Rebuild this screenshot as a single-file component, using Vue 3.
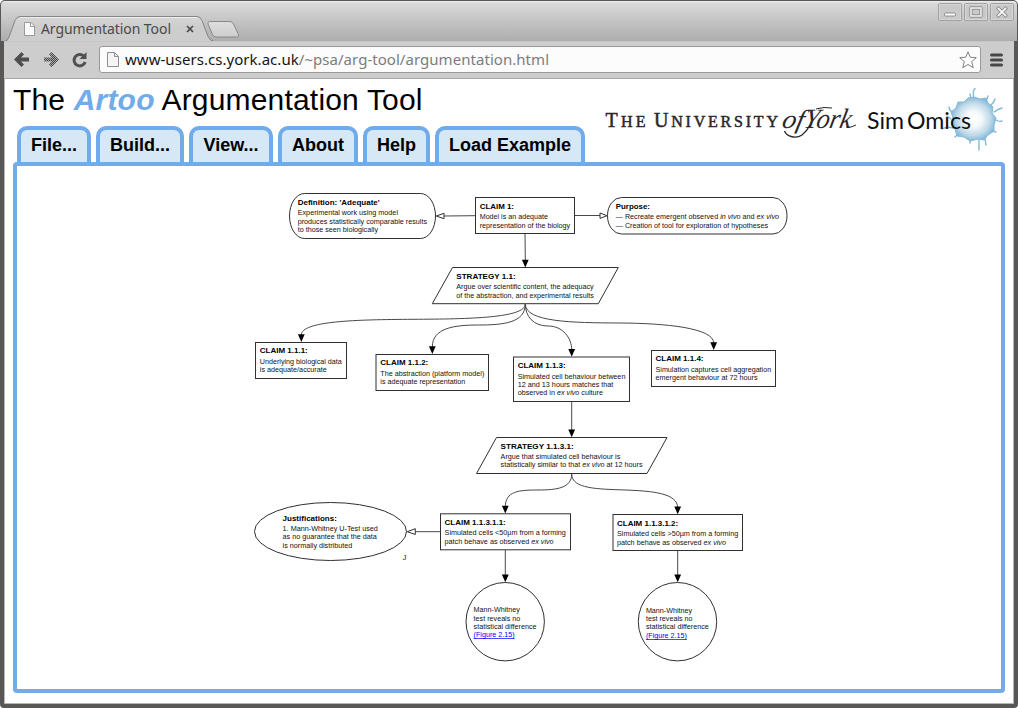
<script setup>
const menu = [
  { label: 'File...', width: 74 },
  { label: 'Build...', width: 88 },
  { label: 'View...', width: 84 },
  { label: 'About', width: 80 },
  { label: 'Help', width: 67 },
  { label: 'Load Example', width: 150 },
]

// each line: [baseline, length, text runs]; an "i" run is italic
const r = (t) => [{ t }]
const blocks = [
  { x: 297.7, title: [205, 82, "Definition: 'Adequate'"], lines: [[215, 100.3, r('Experimental work using model')], [224, 129.3, r('produces statistically comparable results')], [232, 80.3, r('to those seen biologically')]] },
  { x: 479.7, title: [209, 34.3, 'CLAIM 1:'], lines: [[219, 68.3, r('Model is an adequate')], [228, 90.5, r('representation of the biology')]] },
  { x: 615.7, title: [209, 34.3, 'Purpose:'], lines: [[219, 163.3, [{ t: '— Recreate emergent observed ' }, { t: 'in vivo', i: 1 }, { t: ' and ' }, { t: 'ex vivo', i: 1 }]], [228, 152.3, r('— Creation of tool for exploration of hypotheses')]] },
  { x: 456.3, title: [279, 59.3, 'STRATEGY 1.1:'], lines: [[289, 137.3, r('Argue over scientific content, the adequacy')], [298, 137.6, r('of the abstraction, and experimental results')]] },
  { x: 259.8, title: [353, 48, 'CLAIM 1.1.1:'], lines: [[364, 82, r('Underlying biological data')], [372, 67, r('is adequate/accurate')]] },
  { x: 380.3, title: [365, 48, 'CLAIM 1.1.2:'], lines: [[376, 104, r('The abstraction (platform model)')], [384, 85, r('is adequate representation')]] },
  { x: 517.7, title: [368, 48, 'CLAIM 1.1.3:'], lines: [[379, 107.7, r('Simulated cell behaviour between')], [387, 95.7, r('12 and 13 hours matches that')], [395, 85.3, [{ t: 'observed in ' }, { t: 'ex vivo', i: 1 }, { t: ' culture' }]]] },
  { x: 655.5, title: [361, 48, 'CLAIM 1.1.4:'], lines: [[372, 115.7, r('Simulation captures cell aggregation')], [380, 102, r('emergent behaviour at 72 hours')]] },
  { x: 500.6, title: [449, 73, 'STRATEGY 1.1.3.1:'], lines: [[459, 119.7, r('Argue that simulated cell behaviour is')], [467, 142, [{ t: 'statistically similar to that ' }, { t: 'ex vivo', i: 1 }, { t: ' at 12 hours' }]]] },
  { x: 282.6, title: [521, 54.2, 'Justifications:'], lines: [[531, 95.3, r('1. Mann-Whitney U-Test used')], [539, 94.3, r('as no guarantee that the data')], [548, 69.6, r('is normally distributed')]] },
  { x: 402.7, lines: [[560, 3.6, r('J')]] },
  { x: 444.6, title: [525, 61.2, 'CLAIM 1.1.3.1.1:'], lines: [[535, 121.2, r('Simulated cells <50µm from a forming')], [544, 109, [{ t: 'patch behave as observed ' }, { t: 'ex vivo', i: 1 }]]] },
  { x: 617, title: [526, 61.2, 'CLAIM 1.1.3.1.2:'], lines: [[536, 121.2, r('Simulated cells >50µm from a forming')], [545, 109, [{ t: 'patch behave as observed ' }, { t: 'ex vivo', i: 1 }]]] },
  { x: 473.6, lines: [[612, 46.3, r('Mann-Whitney')], [621, 46.7, r('test reveals no')], [629, 62.9, r('statistical difference')], [637, 41, [{ t: '(Figure 2.15)', link: 1 }]]] },
  { x: 645.9, lines: [[613, 46.3, r('Mann-Whitney')], [621, 46.7, r('test reveals no')], [629, 62.9, r('statistical difference')], [638, 41, [{ t: '(Figure 2.15)', link: 1 }]]] },
]

const boxes = [
  [475.5, 197.5, 99, 36], [255.5, 342.5, 91, 36], [376, 354.5, 112.5, 36], [513.5, 357, 116, 44.5],
  [651.5, 350.5, 124, 36], [440.5, 513.8, 130, 36], [613, 514.5, 129.5, 36],
]
const edges = [
  'M525 233.5L525.3 260',
  'M525.3 304C525.3 318 470 319 413 319.3S301.3 321 301.3 335',
  'M525.3 304C525.3 323 503 325 478.5 325S432.3 328 432.3 347',
  'M525.3 304C525.3 316 533 326 548 326S571.7 338 571.7 350',
  'M525.3 304C525.3 322 572 322.8 619 323S713.7 328 713.7 343',
  'M571.7 402V430',
  'M571.7 474C571.7 488 557 490 538 490S505.3 491 505.3 507',
  'M571.7 474C571.7 489 598 489 625 490S677.7 493 677.7 508',
  'M505.3 550V575', 'M677.7 551V575',
  'M475 215.7L444 216', 'M575 215.5H600', 'M440 531.7H415.5',
]
const heads = [[525.3, 267.5], [301.3, 342], [432.3, 354], [571.7, 356.7], [713.7, 350], [571.7, 437.3], [505.3, 513.5], [677.7, 514.3], [505.3, 582.3], [677.7, 582.3]]
</script>

<template>
  <div class="window">
    <header class="titlebar">
      <svg class="tabs" width="250" height="26" viewBox="5 16 250 26">
        <defs>
          <linearGradient id="tabfill" x1="0" y1="0" x2="0" y2="1"><stop offset="0" stop-color="#d6d6d6" /><stop offset=".4" stop-color="#cdcdcd" /></linearGradient>
          <linearGradient id="newtab" x1="0" y1="0" x2="0" y2="1"><stop offset="0" stop-color="#dedede" /><stop offset="1" stop-color="#cecece" /></linearGradient>
        </defs>
        <path d="M4 41.5Q8 41 9 37L15 20.500Q16.500 16.500 20 16.500H197Q200.500 16.500 202 20.500L208 36.500Q210 41 214 41.500V43H4Z" fill="url(#tabfill)" stroke="#858585" />
        <path d="M20 17.500H197" stroke="#eee" />
        <path d="M209.500 21.500H230Q232.500 21.500 233.500 24L238 33.500Q239.500 37 236.500 37H216.500Q213.500 37 212.500 34.500L208 24Q207.500 21.500 209.500 21.500Z" fill="url(#newtab)" stroke="#898989" />
        <path d="M24.500 22.500H31L34.500 26V35.500H24.500Z" fill="#fbfbfb" stroke="#999" />
        <path d="M30.500 23V26.500H34" fill="none" stroke="#999" />
        <text x="41" y="34" class="tabname" textLength="130">Argumentation Tool</text>
        <path d="M187 26L193 32M193 26L187 32" stroke="#484848" stroke-width="1.700" />
      </svg>
      <div class="controls">
        <svg v-for="n in 3" :key="n" width="24" height="19" viewBox="0 0 24 19">
          <rect x=".5" y=".5" width="23" height="17" rx="1.500" fill="#c9c9c9" stroke="#a0a0a0" />
          <rect x="1.500" y="1.500" width="21" height="15" fill="none" stroke="#d6d6d6" />
          <rect v-if="n === 1" x="6.500" y="10" width="11" height="3" rx="1" fill="#fff" stroke="#8d8d8d" />
          <g v-else-if="n === 2" fill="none"><rect x="7" y="5" width="10" height="8" stroke="#8d8d8d" stroke-width="3.400" stroke-linejoin="round" /><rect x="7" y="5" width="10" height="8" stroke="#f2f2f2" stroke-width="1.500" /></g>
          <g v-else stroke-linecap="square"><path d="M8.500 5.500L15.500 12.500M15.500 5.500L8.500 12.500" stroke="#8d8d8d" stroke-width="3.500" /><path d="M8.500 5.500L15.500 12.500M15.500 5.500L8.500 12.500" stroke="#fff" stroke-width="1.700" /></g>
        </svg>
      </div>
    </header>

    <nav class="toolbar">
      <svg class="navicons" width="76" height="18" viewBox="13 50 76 18">
        <defs><pattern id="dots" width="2" height="2" patternUnits="userSpaceOnUse"><rect width="2" height="2" fill="#aaa" /><rect width="1" height="1" fill="#444" /><rect x="1" y="1" width="1" height="1" fill="#444" /></pattern></defs>
        <path d="M14 58.500L21.500 51L24 53.500L21 56.500H29V60.500H21L24 63.500L21.500 66Z" fill="#4e4e4e" />
        <path d="M59 58.500L51.500 51L49 53.500L52 56.500H44V60.500H52L49 63.500L51.500 66Z" fill="url(#dots)" />
        <path d="M83.700 55A5.700 5.700 0 1 0 85.200 61" fill="none" stroke="#505050" stroke-width="3" />
        <path d="M86.500 51V58H79.500Z" fill="#505050" />
      </svg>
      <div class="address">
        <svg width="12" height="15" viewBox="0 0 12 15"><path d="M.5 .5H7.500L11.500 4.500V14.500H.5Z" fill="#f5f5f5" stroke="#8e8e8e" /><path d="M7.500 1V4.500H11" fill="none" stroke="#8e8e8e" /></svg>
        <svg class="url" width="430" height="24"><text x="0" y="17" textLength="424">www-users.cs.york.ac.uk<tspan fill="#7c7c7c">/~psa/arg-tool/argumentation.html</tspan></text></svg>
        <svg class="star" width="18" height="18" viewBox="0 0 18 18"><path d="M9 .8L11.200 6.200L17.300 6.700L12.700 10.600L14.200 16.700L9 13.400L3.800 16.700L5.300 10.600L.7 6.700L6.800 6.200Z" fill="#fff" stroke="#808080" stroke-linejoin="round" /></svg>
      </div>
      <svg class="burger" width="13" height="14" viewBox="0 0 13 14"><path d="M1.500 2H11.500M1.500 7H11.500M1.500 12H11.500" stroke="#484848" stroke-width="3" stroke-linecap="round" /></svg>
    </nav>

    <main class="page">
      <div class="top">
        <div class="left">
          <h1>The <em>Artoo</em> Argumentation Tool</h1>
          <ul class="menu">
            <li v-for="m in menu" :key="m.label" :style="{ width: m.width + 'px' }">{{ m.label }}</li>
          </ul>
        </div>
        <svg class="logos" width="402" height="76" viewBox="601 84 402 76">
          <defs>
            <radialGradient id="cell"><stop offset="0" stop-color="#fff" /><stop offset=".35" stop-color="#f5f9fb" /><stop offset=".75" stop-color="#bfd9e8" /><stop offset="1" stop-color="#84bada" /></radialGradient>
          </defs>
          <g class="uni">
            <text x="604.500" y="127" textLength="40" lengthAdjust="spacing"><tspan font-size="20">T</tspan>HE</text>
            <text x="653" y="127" textLength="124" lengthAdjust="spacing"><tspan font-size="20">U</tspan>NIVERSITY</text>
          </g>
          <text class="script" x="780" y="128" font-size="26" textLength="22" lengthAdjust="spacingAndGlyphs" transform="translate(780 128) skewX(-12) translate(-780 -128)">of</text>
          <text class="script" x="802" y="128" font-size="28" textLength="47" lengthAdjust="spacingAndGlyphs" transform="translate(802 128) skewX(-12) translate(-802 -128)">York</text>
          <path d="M783.500 131C786 137 795 139 801 135C805 132 807 129 809 125" fill="none" stroke="#2b2729" stroke-width="1.400" />
          <path d="M815 109Q823 106.500 831 108" fill="none" stroke="#2b2729" />
          <path d="M845 127Q850 128 855 125" fill="none" stroke="#2b2729" />
          <g fill="none" stroke="#82b9db" stroke-width="1.400" stroke-linecap="round">
            <path d="M973 98Q971 92 974 88.500M970 98L969 94M984 101Q987 98 987 96M989 106Q993 103 994 99M993 112Q997 109 1001 108M995 120Q998 122 1001 121M991 130Q993 132 995 132M984 139L985 145M978 140V150M970 139L969 143M957 134L954 137M952 128Q946 126 941 129M950 119L946 116M951 112Q948 110 948 107" />
          </g>
          <path d="M973 97L979 99L985 98L987 103L992 107L991 113L995 118L993 125L993 131L987 135L983 140L977 139L969 141L963 137L956 136L954 129L950 124L952 118L950 112L955 108L957 102L963 102L967 98Z" fill="url(#cell)" stroke="#86b9d8" stroke-width="1" stroke-linejoin="round" />
          <text class="sim" x="866" y="128.500" textLength="37" lengthAdjust="spacingAndGlyphs">Sim</text>
          <text class="sim" x="906" y="128.500" textLength="64" lengthAdjust="spacingAndGlyphs">Omics</text>
        </svg>
      </div>

      <section class="panel">
        <svg class="diagram" width="984" height="523" viewBox="17 166 984 523">
          <g fill="none" stroke="#303030" stroke-width="1">
            <path v-for="e in edges" :key="e" :d="e" stroke="#484848" />
            <rect v-for="b in boxes" :key="b[0]" :x="b[0]" :y="b[1]" :width="b[2]" :height="b[3]" />
            <rect x="289.500" y="193.500" width="146" height="45" rx="15" ry="22.500" />
            <rect x="607.500" y="197.500" width="179.500" height="36.500" rx="14" ry="18.200" />
            <path d="M452.500 267.500H618.300L598.300 303.700H432.300Z" />
            <path d="M496.500 437.500H667L647 473.500H476.500Z" />
            <ellipse cx="330.500" cy="531.500" rx="76" ry="29" />
            <circle cx="505.200" cy="621.700" r="39.200" />
            <circle cx="677.500" cy="621.700" r="39.200" />
            <path d="M436.300 216L444 213.300V218.700Z" fill="#fff" />
            <path d="M607 215.700L600 213V218.400Z" fill="#fff" />
            <path d="M407.300 531.700L415.300 528.700V534.500Z" fill="#fff" />
          </g>
          <path v-for="h in heads" :key="h.join()" :d="`M${h[0]} ${h[1]}l-3.400 -7.700h6.800z`" fill="#000" />
          <g v-for="b in blocks" :key="b.x">
            <text v-if="b.title" class="title" :x="b.x" :y="b.title[0]" :textLength="b.title[1]" lengthAdjust="spacingAndGlyphs">{{ b.title[2] }}</text>
            <text v-for="l in b.lines" :key="l[0]" class="line" :x="b.x" :y="l[0]" :textLength="l[1]" lengthAdjust="spacingAndGlyphs"><tspan v-for="(p, k) in l[2]" :key="k" :class="{ it: p.i, link: p.link }">{{ p.t }}</tspan></text>
          </g>
        </svg>
      </section>
    </main>
  </div>
</template>

<style>
body { background: #fff; overflow: hidden; }
</style>

<style scoped>
.window {
  box-sizing: border-box;
  width: 1018px;
  height: 708px;
  border: solid #595755;
  border-width: 1px 4px 4px 4px;
  border-radius: 5px 5px 4px 4px;
  background: #cdcdcd;
  display: flex;
  flex-direction: column;
  font-family: "Liberation Sans", Arial, sans-serif;
  box-shadow: inset 1px 0 #b4b4b4, inset -1px -1px #b4b4b4;
}
.titlebar {
  height: 40px;
  flex: none;
  margin: 0 -3px;
  display: flex;
  justify-content: space-between;
  background: linear-gradient(#eee 0, #d9d9d9 2px, #adadad 40px);
  border-radius: 4px 4px 0 0;
}
.tabs { margin: 15px 0 -1px 4px; }
.tabname { font: 14px "Noto Sans", sans-serif; fill: #4a4a4a; }
.controls { display: flex; gap: 2px; padding: 2px 3px 0 0; }
.toolbar {
  box-sizing: border-box;
  height: 38px;
  flex: none;
  display: flex;
  align-items: center;
  border-top: 1px solid #c7c7c7;
  border-bottom: 1px solid #a7a7a7;
  background: #cdcdcd;
}
.navicons { margin-left: 9px; }
.address {
  box-sizing: border-box;
  width: 882px;
  height: 27px;
  margin: 0 0 1px 10px;
  padding: 0 3px 0 7px;
  display: flex;
  align-items: center;
  border: 1px solid #999;
  border-radius: 3px;
  background: #fcfcfc;
}
.url { margin-left: 6px; font: 15px "Noto Sans", sans-serif; fill: #151515; }
.star { margin-left: auto; }
.burger { margin-left: 9px; }
.page { flex: 1; margin: 0 1px 1px; padding: 5px 8px 0; background: #fff; }
.top { display: flex; justify-content: space-between; height: 78px; }
.left { white-space: nowrap; }
h1 { margin: 0; font-size: 30px; line-height: 32px; font-weight: 400; color: #000; letter-spacing: .18px; }
h1 em { font-weight: 700; color: #72abea; }
.menu { display: flex; gap: 5px; list-style: none; margin: 10px 0 0 4px; padding: 0; }
.menu li {
  box-sizing: border-box;
  height: 36px;
  border: 4px solid #72abea;
  border-bottom: 0;
  border-radius: 10px 10px 0 0;
  background: #d6e7f5;
  font-weight: 700;
  font-size: 18px;
  line-height: 30px;
  text-align: center;
}
.logos { flex: none; margin-right: 1px; }
.uni { font: 16px "Liberation Serif", serif; fill: #2b2729; stroke: #2b2729; stroke-width: .5; }
.script { font-family: "Liberation Serif", serif; font-style: italic; fill: #2b2729; }
.sim { font: 24px Lato, sans-serif; fill: #111; }
.panel {
  box-sizing: border-box;
  width: 992px;
  height: 531px;
  border: 4px solid #72abea;
  border-radius: 4px;
}
.diagram { display: block; }
.title { font-size: 7.500px; font-weight: 700; fill: #000; }
.line { font-size: 7.200px; fill: #111; white-space: pre; }
.it { font-style: italic; }
.link { fill: #00f; text-decoration: underline; }
</style>
